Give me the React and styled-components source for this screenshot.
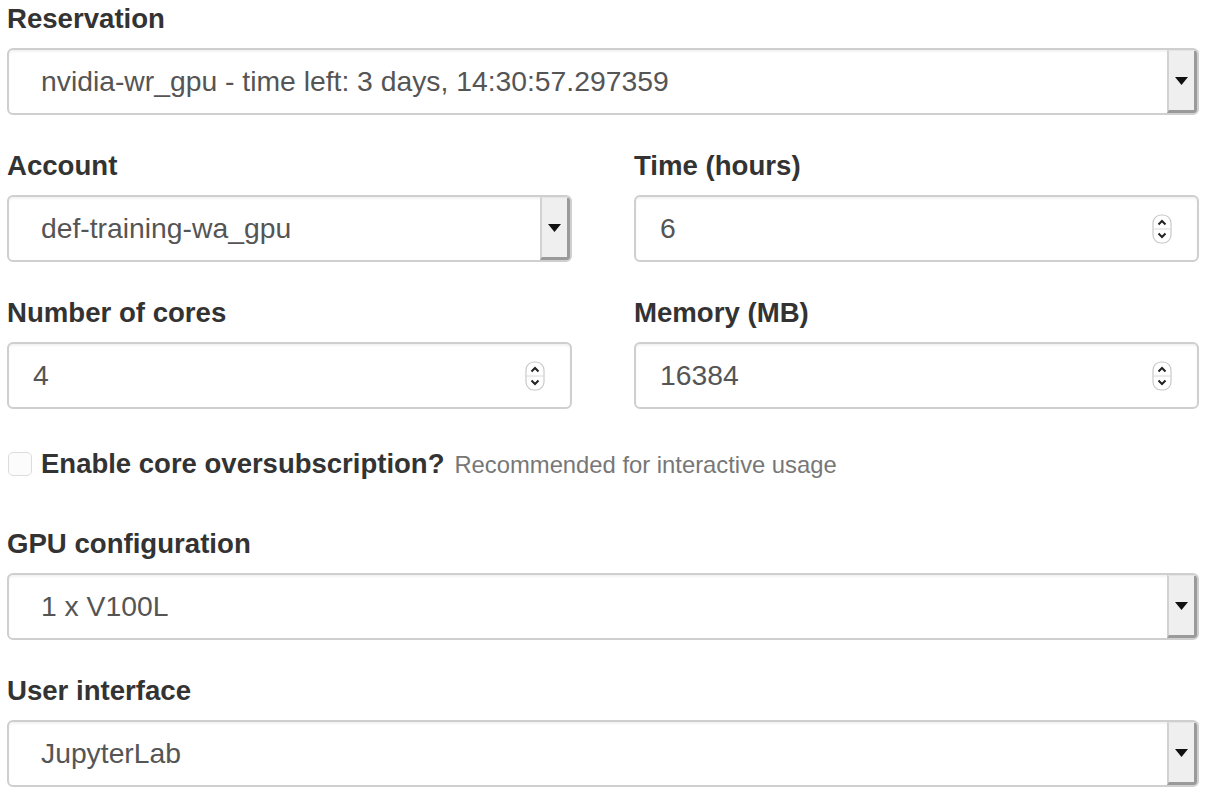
import React from "react";
import styled, { createGlobalStyle } from "styled-components";

const Global = createGlobalStyle`
  html, body { margin: 0; padding: 0; background: #fff; }
  body { font-family: "Liberation Sans", Arial, Helvetica, sans-serif; color: #333; }
`;

const Page = styled.div`
  width: 1192px;
  margin: -2px 0 0 7px;
`;

const Group = styled.div`
  margin-bottom: 30px;
`;

const Row = styled.div`
  display: grid;
  grid-template-columns: 565px 565px;
  column-gap: 62px;
`;

const Label = styled.div`
  font-size: 27.6px;
  font-weight: 700;
  line-height: 40px;
  height: 39px;
  padding-top: 1px;
  margin-bottom: 10px;
  color: #333;
  white-space: nowrap;
`;

const Field = styled.div`
  box-sizing: border-box;
  height: 67px;
  border: 2px solid #cfcfcf;
  border-radius: 6px;
  background: #fff;
  box-shadow: inset 0 2px 2px rgba(0, 0, 0, 0.05);
  display: flex;
  align-items: stretch;
  overflow: hidden;
`;

const Value = styled.div`
  flex: 1;
  display: flex;
  align-items: center;
  padding-left: ${(p) => p.$pad}px;
  font-size: 28.3px;
  color: #555;
  white-space: nowrap;
`;

const ArrowButton = styled.div`
  box-sizing: border-box;
  width: 30px;
  background: #efefef;
  border-left: 2px solid #d2d2d2;
  border-top: 1px solid #e4e4e4;
  border-right: 3px solid #9a9a9a;
  border-bottom: 3px solid #9a9a9a;
  display: flex;
  align-items: center;
  justify-content: center;
`;

const Spinner = styled.div`
  display: flex;
  align-items: center;
  padding-right: 25px;
`;

const CheckRow = styled.div`
  display: flex;
  align-items: center;
  height: 40px;
  margin: 5px 0 39px;
  white-space: nowrap;
`;

const Box = styled.span`
  box-sizing: border-box;
  width: 24px;
  height: 24px;
  margin: 0 9px 0 1px;
  border: 1px solid #dcdcdc;
  border-radius: 5px;
  background: #fcfcfc;
`;

const CheckText = styled.span`
  font-size: 27.5px;
  font-weight: 700;
  color: #333;
`;

const Help = styled.span`
  font-size: 23.8px;
  color: #777;
  margin-left: 10px;
  position: relative;
  top: 1px;
`;

const Arrow = () => (
  <svg width="13" height="8" viewBox="0 0 13 8">
    <path d="M0 0 H13 L6.5 8 Z" fill="#111" />
  </svg>
);

const SpinIcon = () => (
  <svg width="20" height="30" viewBox="0 0 20 30">
    <rect x="1" y="1" width="18" height="28" rx="8" fill="#fff" stroke="#c8c8c8" strokeWidth="1.2" />
    <line x1="1.5" y1="15" x2="18.5" y2="15" stroke="#d8d8d8" strokeWidth="1" />
    <path d="M6.5 10.5 L10 7 L13.5 10.5" fill="none" stroke="#222" strokeWidth="2" />
    <path d="M6.5 19.5 L10 23 L13.5 19.5" fill="none" stroke="#222" strokeWidth="2" />
  </svg>
);

const Select = ({ value }) => (
  <Field>
    <Value $pad={32}>{value}</Value>
    <ArrowButton>
      <Arrow />
    </ArrowButton>
  </Field>
);

const NumberInput = ({ value }) => (
  <Field>
    <Value $pad={24}>{value}</Value>
    <Spinner>
      <SpinIcon />
    </Spinner>
  </Field>
);

export default function App() {
  return (
    <>
      <Global />
      <Page>
        <Group>
          <Label>Reservation</Label>
          <Select value="nvidia-wr_gpu - time left: 3 days, 14:30:57.297359" />
        </Group>
        <Row>
          <Group>
            <Label>Account</Label>
            <Select value="def-training-wa_gpu" />
          </Group>
          <Group>
            <Label>Time (hours)</Label>
            <NumberInput value="6" />
          </Group>
        </Row>
        <Row>
          <Group>
            <Label>Number of cores</Label>
            <NumberInput value="4" />
          </Group>
          <Group>
            <Label>Memory (MB)</Label>
            <NumberInput value="16384" />
          </Group>
        </Row>
        <CheckRow>
          <Box />
          <CheckText>Enable core oversubscription?</CheckText>
          <Help>Recommended for interactive usage</Help>
        </CheckRow>
        <Group>
          <Label>GPU configuration</Label>
          <Select value="1 x V100L" />
        </Group>
        <Group>
          <Label>User interface</Label>
          <Select value="JupyterLab" />
        </Group>
      </Page>
    </>
  );
}
